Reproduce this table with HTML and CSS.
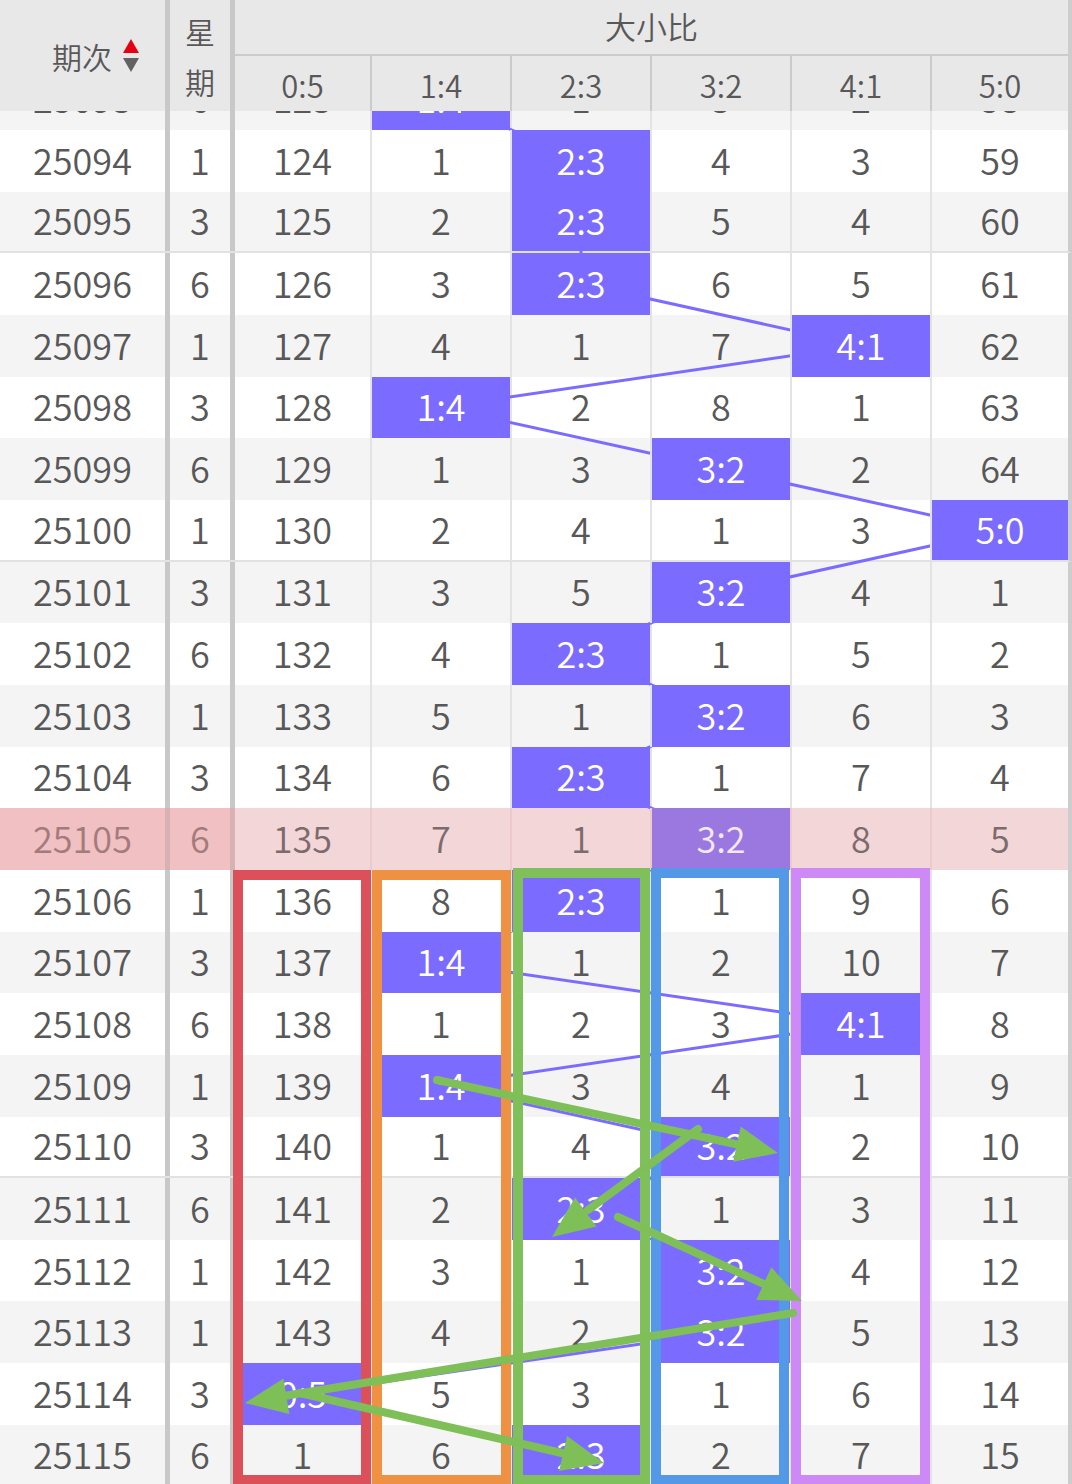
FILE: index.html
```html
<!DOCTYPE html>
<html lang="zh-CN">
<head>
<meta charset="utf-8">
<title>大小比走势</title>
<link rel="stylesheet" href="styles.css">
</head>
<body>
<div class="page">
  <div class="head">
    <div class="h-qc"><span>期次</span><svg class="sort" width="18" height="36" viewBox="0 0 18 36"><polygon points="9,1 17,15 1,15" fill="#e60012"/><polygon points="1,20 17,20 9,34" fill="#626262"/></svg></div>
    <div class="h-xq"><span>星</span><span>期</span></div>
    <div class="h-grp">
      <div class="h-title">大小比</div>
      <div class="h-cols"><div>0:5</div><div>1:4</div><div>2:3</div><div>3:2</div><div>4:1</div><div>5:0</div></div>
    </div>
  </div>
  <div class="body">
    <div class="rows">
      <svg class="trend" width="1072" height="1420" viewBox="0 0 1072 1420"><polyline fill="none" stroke="#7b6cff" stroke-width="3" points="441,30.83 581,92.5 581,154.17 581,215.83 861,277.5 441,339.17 721,400.83 1000,462.5 721,524.17 581,585.83 721,647.5 581,709.17 721,770.83 581,832.5 441,894.17 861,955.83 441,1017.5 721,1079.17 581,1140.83 721,1202.5 721,1264.17 302.5,1325.83 581,1387.5"/></svg>
      <div class="row alt"><div class="c qc">25093</div><div class="c xq">6</div><div class="c d0">123</div><div class="c d hi">1:4</div><div class="c d">1</div><div class="c d">3</div><div class="c d">2</div><div class="c d">58</div></div>
      <div class="row"><div class="c qc">25094</div><div class="c xq">1</div><div class="c d0">124</div><div class="c d">1</div><div class="c d hi">2:3</div><div class="c d">4</div><div class="c d">3</div><div class="c d">59</div></div>
      <div class="row alt sep"><div class="c qc">25095</div><div class="c xq">3</div><div class="c d0">125</div><div class="c d">2</div><div class="c d hi">2:3</div><div class="c d">5</div><div class="c d">4</div><div class="c d">60</div></div>
      <div class="row"><div class="c qc">25096</div><div class="c xq">6</div><div class="c d0">126</div><div class="c d">3</div><div class="c d hi">2:3</div><div class="c d">6</div><div class="c d">5</div><div class="c d">61</div></div>
      <div class="row alt"><div class="c qc">25097</div><div class="c xq">1</div><div class="c d0">127</div><div class="c d">4</div><div class="c d">1</div><div class="c d">7</div><div class="c d hi">4:1</div><div class="c d">62</div></div>
      <div class="row"><div class="c qc">25098</div><div class="c xq">3</div><div class="c d0">128</div><div class="c d hi">1:4</div><div class="c d">2</div><div class="c d">8</div><div class="c d">1</div><div class="c d">63</div></div>
      <div class="row alt"><div class="c qc">25099</div><div class="c xq">6</div><div class="c d0">129</div><div class="c d">1</div><div class="c d">3</div><div class="c d hi">3:2</div><div class="c d">2</div><div class="c d">64</div></div>
      <div class="row sep"><div class="c qc">25100</div><div class="c xq">1</div><div class="c d0">130</div><div class="c d">2</div><div class="c d">4</div><div class="c d">1</div><div class="c d">3</div><div class="c d hi">5:0</div></div>
      <div class="row alt"><div class="c qc">25101</div><div class="c xq">3</div><div class="c d0">131</div><div class="c d">3</div><div class="c d">5</div><div class="c d hi">3:2</div><div class="c d">4</div><div class="c d">1</div></div>
      <div class="row"><div class="c qc">25102</div><div class="c xq">6</div><div class="c d0">132</div><div class="c d">4</div><div class="c d hi">2:3</div><div class="c d">1</div><div class="c d">5</div><div class="c d">2</div></div>
      <div class="row alt"><div class="c qc">25103</div><div class="c xq">1</div><div class="c d0">133</div><div class="c d">5</div><div class="c d">1</div><div class="c d hi">3:2</div><div class="c d">6</div><div class="c d">3</div></div>
      <div class="row"><div class="c qc">25104</div><div class="c xq">3</div><div class="c d0">134</div><div class="c d">6</div><div class="c d hi">2:3</div><div class="c d">1</div><div class="c d">7</div><div class="c d">4</div></div>
      <div class="row pink"><div class="c qc">25105</div><div class="c xq">6</div><div class="c d0">135</div><div class="c d">7</div><div class="c d">1</div><div class="c d hi">3:2</div><div class="c d">8</div><div class="c d">5</div></div>
      <div class="row"><div class="c qc">25106</div><div class="c xq">1</div><div class="c d0">136</div><div class="c d">8</div><div class="c d hi">2:3</div><div class="c d">1</div><div class="c d">9</div><div class="c d">6</div></div>
      <div class="row alt"><div class="c qc">25107</div><div class="c xq">3</div><div class="c d0">137</div><div class="c d hi">1:4</div><div class="c d">1</div><div class="c d">2</div><div class="c d">10</div><div class="c d">7</div></div>
      <div class="row"><div class="c qc">25108</div><div class="c xq">6</div><div class="c d0">138</div><div class="c d">1</div><div class="c d">2</div><div class="c d">3</div><div class="c d hi">4:1</div><div class="c d">8</div></div>
      <div class="row alt"><div class="c qc">25109</div><div class="c xq">1</div><div class="c d0">139</div><div class="c d hi">1:4</div><div class="c d">3</div><div class="c d">4</div><div class="c d">1</div><div class="c d">9</div></div>
      <div class="row sep"><div class="c qc">25110</div><div class="c xq">3</div><div class="c d0">140</div><div class="c d">1</div><div class="c d">4</div><div class="c d hi">3:2</div><div class="c d">2</div><div class="c d">10</div></div>
      <div class="row alt"><div class="c qc">25111</div><div class="c xq">6</div><div class="c d0">141</div><div class="c d">2</div><div class="c d hi">2:3</div><div class="c d">1</div><div class="c d">3</div><div class="c d">11</div></div>
      <div class="row"><div class="c qc">25112</div><div class="c xq">1</div><div class="c d0">142</div><div class="c d">3</div><div class="c d">1</div><div class="c d hi">3:2</div><div class="c d">4</div><div class="c d">12</div></div>
      <div class="row alt"><div class="c qc">25113</div><div class="c xq">1</div><div class="c d0">143</div><div class="c d">4</div><div class="c d">2</div><div class="c d hi">3:2</div><div class="c d">5</div><div class="c d">13</div></div>
      <div class="row"><div class="c qc">25114</div><div class="c xq">3</div><div class="c d0 hi">0:5</div><div class="c d">5</div><div class="c d">3</div><div class="c d">1</div><div class="c d">6</div><div class="c d">14</div></div>
      <div class="row alt sep"><div class="c qc">25115</div><div class="c xq">6</div><div class="c d0">1</div><div class="c d">6</div><div class="c d hi">2:3</div><div class="c d">2</div><div class="c d">7</div><div class="c d">15</div></div>
    </div>
  </div>
  <svg class="marks" width="1072" height="1484" viewBox="0 0 1072 1484">
    <g fill="none" stroke-width="10">
      <rect x="238" y="875" width="128" height="605" stroke="#dc5159"/>
      <rect x="377" y="875" width="129" height="605" stroke="#ee9142"/>
      <rect x="518" y="873" width="127" height="607" stroke="#80c05b"/>
      <rect x="656" y="873" width="128" height="607" stroke="#5499e8"/>
      <rect x="796" y="873" width="129" height="607" stroke="#cd89f6"/>
    </g>
    <g stroke="#7fbf57" stroke-width="8" stroke-linecap="round" fill="none">
      <line x1="437" y1="1080" x2="740" y2="1145"/>
      <line x1="698" y1="1129" x2="588" y2="1210"/>
      <line x1="618" y1="1217" x2="766" y2="1285"/>
      <line x1="793" y1="1313" x2="284" y2="1396"/>
      <line x1="300" y1="1393" x2="566" y2="1454"/>
    </g>
    <g fill="#7fbf57">
      <polygon points="778,1153 733.1,1161.8 740.7,1126.6"/>
      <polygon points="552,1237 575.1,1197.5 596.5,1226.5"/>
      <polygon points="802,1301 756.3,1300 771.3,1267.2"/>
      <polygon points="245,1403 283.5,1378.4 289.3,1414"/>
      <polygon points="604,1463 559.1,1471.1 567.1,1436.1"/>
    </g>
  </svg>
</div>
</body>
</html>
```
FILE: styles.css
```css
* {
  box-sizing: border-box;
  margin: 0;
  padding: 0;
}

html, body {
  background: #ffffff;
}

body {
  margin: 0;
  font-family: "Noto Sans CJK SC", "Noto Sans", sans-serif;
  font-weight: 350;
  color: #585858;
}

.page {
  position: relative;
  width: 1072px;
  height: 1484px;
  overflow: hidden;
}

/* ---------- header ---------- */
.head {
  display: grid;
  grid-template-columns: 165px 65px 842px;
  height: 111px;
  background: #e8e8e8;
}

.h-qc {
  display: flex;
  align-items: center;
  justify-content: center;
  gap: 10px;
  padding-left: 27px;
  font-size: 30px;
  line-height: 1;
}

.sort {
  display: block;
  flex: none;
}

.h-xq {
  display: flex;
  flex-direction: column;
  align-items: center;
  justify-content: center;
  border-left: 5px solid #c8c8c8;
  font-size: 30px;
  line-height: 50px;
}

.h-grp {
  display: flex;
  flex-direction: column;
  border-left: 5px solid #c8c8c8;
  border-right: 4px solid #cdcdcd;
}

.h-title {
  height: 56px;
  border-bottom: 2px solid #cbcbcb;
  display: flex;
  align-items: center;
  justify-content: center;
  padding-bottom: 4px;
  font-size: 31px;
  line-height: 1;
}

.h-cols {
  flex: 1;
  display: grid;
  grid-template-columns: 135px repeat(4, 140px) 138px;
}

.h-cols > div {
  display: flex;
  align-items: center;
  justify-content: center;
  padding-top: 2px;
  font-size: 31px;
  line-height: 1;
}

.h-cols > div + div {
  border-left: 2px solid #cbcbcb;
}

/* ---------- body ---------- */
.body {
  height: 1373px;
  overflow: hidden;
}

.rows {
  position: relative;
  margin-top: -42.67px;
}

.trend {
  position: absolute;
  left: 0;
  top: 0;
  z-index: 1;
  pointer-events: none;
}

.row {
  display: grid;
  grid-template-columns: 165px 65px 140px repeat(4, 140px) 138px;
  height: 61.667px;
  width: 1072px;
  background: #ffffff;
  border-right: 4px solid #cdcdcd;
}

.row.alt {
  background: #f4f4f4;
}

.row.sep {
  border-bottom: 2px solid #e2e2e2;
}

.c {
  display: flex;
  align-items: center;
  justify-content: center;
  padding-bottom: 4px;
  font-size: 36px;
  line-height: 1;
}

.c.xq,
.c.d0 {
  border-left: 5px solid #c8c8c8;
}

.c.d {
  border-left: 2px solid #e3e3e3;
}

.c.hi {
  position: relative;
  z-index: 2;
  background: #7b6cff;
  color: #ffffff;
}

/* highlighted current issue row */
.row.pink {
  background: #f3d6d8;
  color: #7c6b6c;
}

.row.pink .qc,
.row.pink .xq {
  background: #f0c0c2;
  color: #a47b7d;
}

.row.pink .xq,
.row.pink .d0 {
  border-left-color: #d7b1b3;
}

.row.pink .d {
  border-left-color: #ecc9cb;
}

.row.pink .hi {
  background: #9b78df;
  color: #f3e8f7;
}

/* ---------- annotations ---------- */
.marks {
  position: absolute;
  left: 0;
  top: 0;
  z-index: 10;
  pointer-events: none;
}
```
